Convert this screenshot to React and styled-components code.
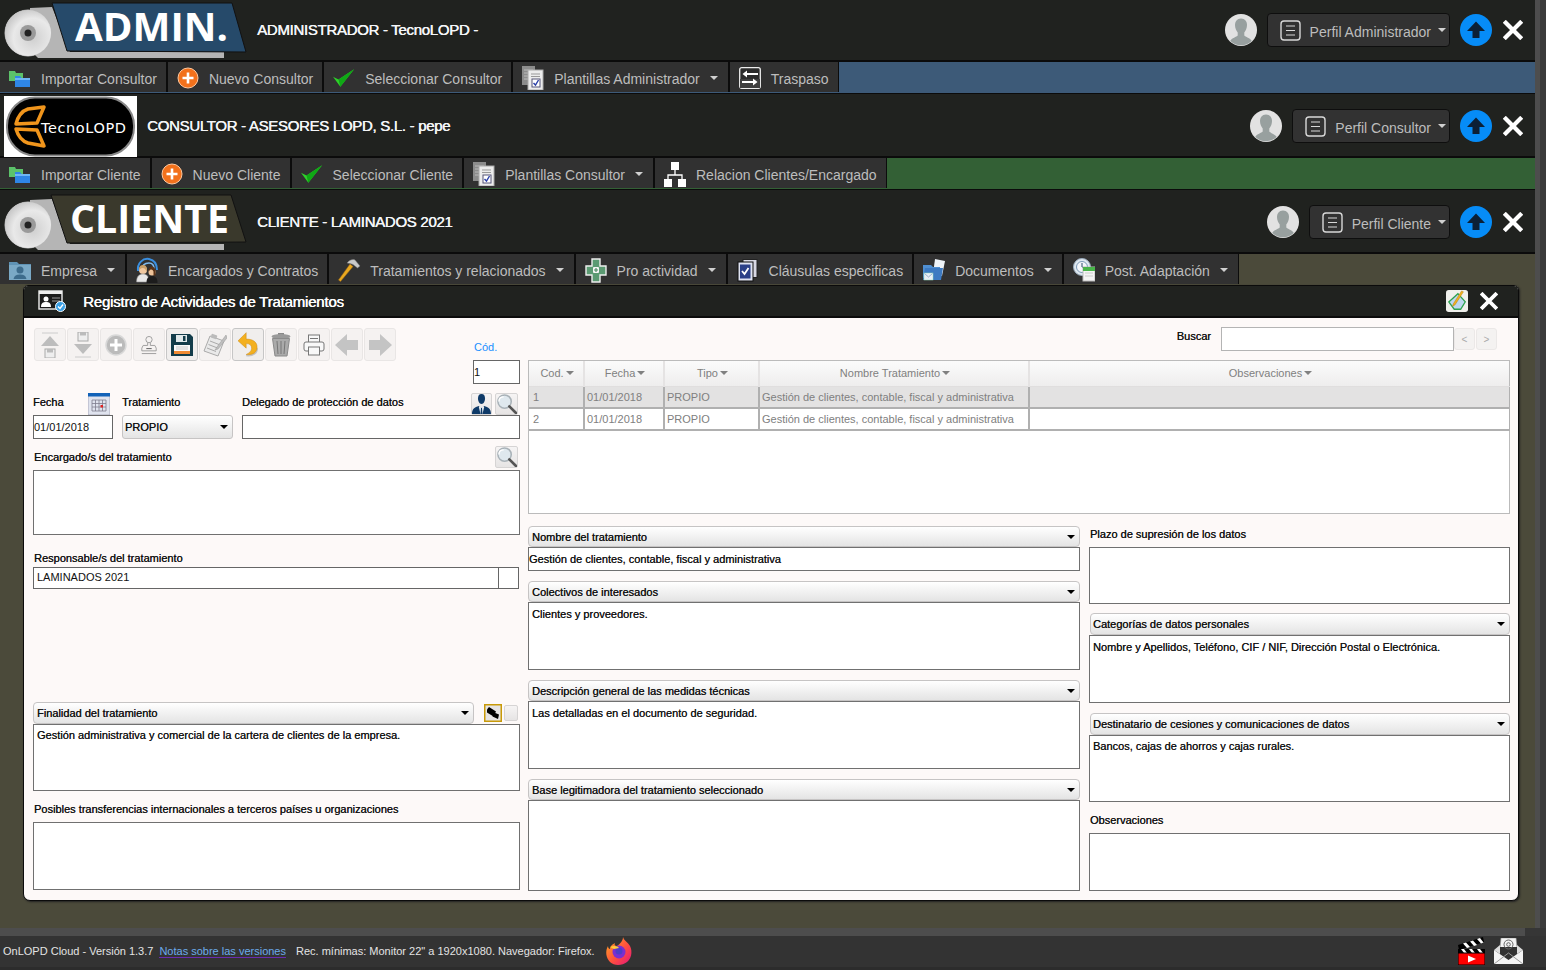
import React from "react";
import styled, { createGlobalStyle } from "styled-components";

const Global = createGlobalStyle`
  html, body { margin: 0; padding: 0; background: #4b4a3a; overflow: hidden; }
  body { font-family: "Liberation Sans", Arial, sans-serif; }
  * { box-sizing: border-box; }
`;

const Page = styled.div`width: 1546px; height: 970px; display: flex; flex-direction: column;`;
const Shell = styled.div`display: flex; height: 928px;`;
const Main = styled.div`width: 1535px; display: flex; flex-direction: column;`;
const ScrollTrack = styled.div`
  width: 11px; display: flex;
  background: #3b3b3b;
  &::before { content: ""; width: 5px; background: #4d4d4d; }
`;

const HeaderBar = styled.header`
  height: ${p => p.$h}px; flex: none; display: flex; align-items: flex-start;
  background: #20221f; border-bottom: 2px solid #0b0b0b;
`;
const LogoSlot = styled.div`width: ${p => p.$w}px; flex: none; display: flex; padding-left: ${p => p.$pl || 0}px; padding-top: ${p => p.$pt || 0}px;`;
const RowTitle = styled.h1`
  margin: 0; font-size: 15px; font-weight: 400; color: #f4f6f8; line-height: 18px; letter-spacing: -0.3px;
  text-shadow: 0.4px 0 0 #f4f6f8; padding-top: ${p => p.$pt}px; white-space: nowrap;
`;
const RowRight = styled.div`margin-left: auto; display: flex; align-items: center; padding: ${p => p.$pt}px 12px 0 0;`;
const ProfileBtn = styled.button`
  height: 34px; display: flex; align-items: center; margin: 0 10px; padding: 0 3px 0 12px;
  background: #323232; border: 1px solid #0e0e0e; border-radius: 4px; color: #bdbdbd; font: 14px "Liberation Sans", sans-serif;
`;
const ProfileLabel = styled.span`margin: 4px 7px 0 9px;`;
const Caret = styled.i`
  display: inline-block; width: 0; height: 0; flex: none;
  border-left: ${p => p.$s || 4}px solid transparent; border-right: ${p => p.$s || 4}px solid transparent;
  border-top: ${p => p.$t || 4}px solid ${p => p.$c || "#d0d0d0"};
`;

const Nav = styled.nav`height: ${p => p.$end ? 31 : 32}px; flex: none; display: flex; background: ${p => p.$bg}; ${p => !p.$end && "border-bottom: 1px solid #0b0b0b;"}`;
const NavItem = styled.a`
  height: 30px; display: flex; align-items: center; padding: 2px ${p => p.$caret ? 10 : 9}px 0 7px; background: #313131;
  border-right: 1px solid #0c0c0c; border-left: 1px solid #0c0c0c; color: #bdbdbd; font-size: 14px; white-space: nowrap;
  &:first-child { border-left: 0; }
`;
const NavIcon = styled.span`width: 26px; height: 26px; margin-right: 8px; display: flex; align-items: center; justify-content: center; flex: none;`;
const NavLabel = styled.span`margin-top: 2px;`;
const NavCaret = styled.span`margin-left: 10px; display: flex;`;

const Win = styled.section`
  margin-left: 23px; width: 1496px; height: 616px; display: flex; flex-direction: column;
  border: 1px solid #0b0b0b; border-radius: 5px 5px 7px 7px; overflow: hidden; background: #fdf9f8;
  box-shadow: 1px 1px 2px #222;
`;
const WinTitle = styled.div`
  height: 32px; flex: none; display: flex; align-items: center; background: #20221f; border-bottom: 2px solid #0b0b0b; padding: 0 20px 0 14px;
`;
const WinHeading = styled.h2`
  margin: 1px 0 0 17px; font-size: 15px; font-weight: 400; letter-spacing: -0.2px; color: #fff; text-shadow: 0.4px 0 0 #fff;
`;
const WinActions = styled.div`margin-left: auto; display: flex; align-items: center; gap: 12px;`;
const WinBody = styled.div`flex: 1; display: flex; padding: 10px 8px 0 9px; gap: 8px;`;

const LeftCol = styled.div`width: 487px; flex: none; display: flex; flex-direction: column;`;
const RightArea = styled.div`width: 982px; flex: none; display: flex; flex-direction: column;`;

const TopRow = styled.div`height: 64px; display: flex; justify-content: space-between;`;
const Tools = styled.div`display: flex; gap: 1px; padding-left: 1px; height: 33px;`;
const Tool = styled.button`
  width: 32px; height: 33px; padding: 0; display: flex; align-items: center; justify-content: center;
  background: ${p => p.$on ? "#f0eeed" : "#f5f2f1"}; border: 1px solid ${p => p.$on ? "#c6c6c6" : "#e9e6e5"}; border-radius: 3px;
`;
const CodBlock = styled.div`width: 47px; display: flex; flex-direction: column; padding-top: 12px;`;
const CodLabel = styled.span`font-size: 11px; line-height: 14px; color: #1a8fff; padding-left: 1px; margin-bottom: 6px;`;

const Input = styled.div`
  height: ${p => p.$h || 24}px; width: ${p => p.$w ? p.$w + "px" : "100%"}; flex: none;
  display: flex; align-items: center; padding: 0 0 ${p => p.$pb || 0}px ${p => p.$pl ?? 0}px;
  background: #fff; border: 1px solid #666; color: #111; font-size: 11px;
`;
const Label = styled.span`font-size: 11px; line-height: 14px; color: #111; text-shadow: 0.2px 0 0 #333; white-space: nowrap;`;
const LabelRow = styled.div`
  height: ${p => p.$h || 23}px; display: flex; align-items: center; justify-content: space-between;
  padding: 0 ${p => p.$pr || 0}px ${p => p.$pb ?? 3}px ${p => p.$pl || 0}px;
`;
const DataRow = styled.div`display: flex; gap: 9px;`;
const DataCol = styled.div`width: ${p => p.$w}px; flex: none; display: flex; flex-direction: column;`;
const IconGroup = styled.div`display: flex; align-items: center; gap: 3px; margin-top: 3px;`;
const IconTile = styled.span`
  width: ${p => p.$w || 22}px; height: ${p => p.$ih || 22}px; display: flex; align-items: center; justify-content: center; flex: none;
  background: linear-gradient(#f6f4f4, #e6e4e4); border: 1px solid #d6d4d4; border-radius: 2px;
`;
const SelectBox = styled.div`
  height: ${p => p.$h || 24}px; width: ${p => p.$w ? p.$w + "px" : "auto"}; display: flex; align-items: center; justify-content: space-between;
  padding: 0 4px 0 ${p => p.$pl || 3}px; margin-left: ${p => p.$ml || 0}px;
  background: linear-gradient(#fff, #e4e4e4); border: 1px solid #c6c4c4; border-radius: ${p => p.$round || "4px"};
  color: #111; font-size: 11px; text-shadow: 0.2px 0 0 #333;
`;
const Block = styled.div`margin-top: ${p => p.$mt || 0}px; display: ${p => p.$flex ? "flex" : "block"}; align-items: center; gap: ${p => p.$gap || 0}px;`;
const Box = styled.div`
  height: ${p => p.$h}px; background: #fff; border: 1px solid #707070; padding: ${p => p.$pad || "4px 3px"};
  font-size: 11px; line-height: 14px; color: #111; text-shadow: 0.15px 0 0 #444;
`;
const TinyBox = styled.div`width: 20px; height: 22px; border: 1px solid #666; border-left: 0; background: #fff;`;
const Spacer = styled.span`width: ${p => p.$w}px; flex: none;`;

const SearchRow = styled.div`height: 32px; display: flex; justify-content: flex-end; padding-right: 12px;`;
const SearchLabel = styled.span`font-size: 11px; line-height: 14px; color: #111; text-shadow: 0.2px 0 0 #333; margin: 1px 10px 0 0;`;
const SearchInput = styled.div`width: 233px; height: 24px; margin-top: -1px; background: #fff; border: 1px solid #b4b4b4;`;
const PageBtn = styled.button`
  width: 21px; height: 22px; padding: 0; margin-right: 1px; background: #f4f2f1; border: 1px solid #ebe8e7; border-radius: 3px;
  color: #aaa; font: 10px "Liberation Sans", sans-serif;
`;

const TableWrap = styled.div`height: 154px; background: #fff; border: 1px solid #bbb;`;
const Grid = styled.table`width: 980px; table-layout: fixed; border-collapse: collapse; font-size: 11px; color: #808080;`;
const Th = styled.th`
  height: 25px; font-weight: 400; text-align: center; padding: 0 0 0 2px; background: linear-gradient(#fbfbfb, #eeeded);
  border-right: 2px solid #e5e3e3; border-bottom: 1px solid #e0dede;
  &:last-child { border-right: 0; }
`;
const ThInner = styled.span`display: inline-flex; align-items: center; gap: 2px;`;
const Td = styled.td`
  height: 22px; padding: 0 0 0 2px; background: ${p => p.$sel ? "#e3e2e2" : "#fff"};
  border-right: 2px solid #b0b0b0; border-bottom: 2px solid #b0b0b0; white-space: nowrap; overflow: hidden;
  &:first-child { padding-left: 4px; }
  &:last-child { border-right: 1px solid #b0b0b0; }
`;

const Lower = styled.div`display: flex; gap: 9px; margin-top: 12px;`;
const MidCol = styled.div`width: 552px; flex: none;`;
const SideCol = styled.div`width: 421px; flex: none;`;

const SideLabelRow = styled.div`height: ${p => p.$h || 21}px; display: flex; align-items: center; padding: 0 0 ${p => p.$pb || 0}px 1px;`;

const BottomStrip = styled.div`height: 8px; flex: none; background: #363636; &::before { content: ""; display: block; width: 1525px; height: 8px; background: #4d4d4d; }`;
const Footer = styled.footer`
  height: 34px; flex: none; display: flex; align-items: center; padding: 0 23px 4px 3px; background: #333; box-shadow: inset 0 -3px 0 #2c2c2c;
  font-size: 11px; color: #e4e4e4; white-space: nowrap;
`;
const FootLink = styled.a`margin-left: 6px; color: #6cabeb; border-bottom: 1px solid #6a2bb0; line-height: 12px;`;
const FootRec = styled.span`margin-left: 10px; margin-right: 10px;`;
const FootRight = styled.div`margin-left: auto; display: flex; align-items: center; gap: 9px;`;

/* ---------- drawings ---------- */
const Disc = ({ cy }) => (
  <g>
    <circle cx="28" cy={cy} r="23" fill="#dcdcdc" stroke="#bbb" />
    <circle cx="28" cy={cy} r="23" fill="url(#dg)" />
    <circle cx="28" cy={cy} r="8" fill="#9a9a9a" />
    <circle cx="28" cy={cy} r="3.5" fill="#222" />
  </g>
);
const DiscDefs = () => (
  <defs>
    <radialGradient id="dg" cx="0.6" cy="0.6" r="0.7">
      <stop offset="0" stopColor="#cfcfcf" />
      <stop offset="0.6" stopColor="#e9e9e9" />
      <stop offset="1" stopColor="#bdbdbd" />
    </radialGradient>
  </defs>
);
const LogoAdmin = () => (
  <svg width="250" height="60" viewBox="0 0 250 60">
    <DiscDefs />
    <polygon points="30,8 52,7 70,52 224,52 224,58 38,58 30,50" fill="#b5b5b5" />
    <polygon points="52,3 232,3 246,52 67,51" fill="#264a6a" stroke="#111" />
    <Disc cy="33" />
    <text x="75" y="41" fontFamily="Open Sans" fontWeight="700" fontSize="39" fill="#fff" textLength="153" lengthAdjust="spacingAndGlyphs">ADMIN.</text>
  </svg>
);
const LogoCliente = () => (
  <svg width="250" height="62" viewBox="0 0 250 62">
    <DiscDefs />
    <polygon points="30,10 52,9 70,54 224,54 224,60 38,60 30,52" fill="#b5b5b5" />
    <polygon points="51,5 231,5 246,52 67,53" fill="#3a392c" stroke="#111" />
    <Disc cy="35" />
    <text x="70" y="43" fontFamily="Open Sans" fontWeight="700" fontSize="39" fill="#fff" textLength="159" lengthAdjust="spacingAndGlyphs">CLIENTE</text>
  </svg>
);
const LogoTecno = () => (
  <svg width="133" height="61" viewBox="0 0 133 61">
    <rect width="133" height="61" fill="#fff" />
    <rect x="3" y="1.5" width="127" height="58" rx="28" fill="#000" stroke="#888" strokeWidth="2" />
    <path d="M12 28 C14 20 18 15 24 13 L40 11 L33 27 Z M12 33 L33 34 L40 50 L24 47 C18 45 14 40 12 33 Z" fill="none" stroke="#f0951c" strokeWidth="3.500" strokeLinejoin="round" />
    <text x="37" y="37" fontFamily="DejaVu Sans" fontSize="14.5" fill="#fff" textLength="85">TecnoLOPD</text>
  </svg>
);
const Avatar = () => (
  <svg width="32" height="32" viewBox="0 0 32 32">
    <circle cx="16" cy="16" r="16" fill="#e2e2e2" />
    <path d="M16 4.500c4 0 6 3 6 6.500 0 3-1.300 6-2.700 7.500v3c1 1.500 6 2.500 7.500 5.500A16 16 0 0 1 5.200 27C6.700 24 11.700 23 12.700 21.500v-3C11.300 17 10 14 10 11c0-3.500 2-6.500 6-6.500z" fill="#98a09f" />
  </svg>
);
const ListIco = () => (
  <svg width="21" height="21" viewBox="0 0 21 21" fill="none" stroke="#d8d8d8">
    <rect x="1" y="1" width="19" height="19" rx="3" strokeWidth="1.400" />
    <path d="M6 6h9M6 10.500h9M6 15h9" strokeWidth="1.200" />
  </svg>
);
const UpBtn = () => (
  <svg width="32" height="32" viewBox="0 0 32 32">
    <circle cx="16" cy="16" r="16" fill="#068cf7" />
    <path d="M16 7.500 25 17h-5.500v7h-7v-7H7z" fill="#0c2036" />
  </svg>
);
const CloseX = ({ s = 20 }) => (
  <svg width={s} height={s} viewBox="0 0 18 18"><path d="M2.500 2.500l13 13M15.500 2.500l-13 13" stroke="#fff" strokeWidth="3.800" strokeLinecap="square" /></svg>
);

const IImport = () => (
  <svg width="22" height="17" viewBox="0 0 22 17">
    <path d="M0 1h6l1 2h7v8H0z" fill="#5cc26a" />
    <path d="M6 6h5l1.500 2H21v9H6z" fill="#2f86e6" />
    <path d="M6 8h15v2H6z" fill="#6fb6f5" />
  </svg>
);
const IPlus = () => (
  <svg width="22" height="22" viewBox="0 0 22 22">
    <circle cx="11" cy="11" r="10" fill="#f2711c" stroke="#ffc9a0" strokeWidth="1" />
    <path d="M11 5.500v11M5.500 11h11" stroke="#fff" strokeWidth="2.600" />
  </svg>
);
const ICheck = () => (
  <svg width="22" height="19" viewBox="0 0 24 20">
    <path d="M0 8l6 3L23 0 8 19z" fill="#2fd02a" />
    <path d="M6 11 23 0 8 19z" fill="#0fa815" />
  </svg>
);
const IDocs = () => (
  <svg width="22" height="24" viewBox="0 0 22 24">
    <rect x="0" y="0" width="13" height="19" fill="#8c8c8c" />
    <path d="M2 4h9M2 7h9M2 10h9M2 13h9" stroke="#bbb" />
    <rect x="6" y="4" width="15" height="20" fill="#ececec" stroke="#aaa" />
    <path d="M9 8h9M9 10.500h9" stroke="#999" />
    <rect x="10" y="13" width="8" height="8" fill="#fff" stroke="#557" />
    <path d="M11.500 17l2 2 3-5" stroke="#2a3fa8" strokeWidth="1.400" fill="none" />
  </svg>
);
const ISwap = () => (
  <svg width="22" height="22" viewBox="0 0 22 22">
    <rect x="0.700" y="0.700" width="20.600" height="20.600" rx="2" fill="#2c2c2c" stroke="#ededed" strokeWidth="1.300" />
    <path d="M1 12 21 12V21H1z" fill="#3e3e3e" />
    <path d="M8 3.500 3.500 7 8 10.500V8h11V6H8zM14 11.500 18.500 15 14 18.500V16H3v-2h11z" fill="#fff" />
  </svg>
);
const ITree = () => (
  <svg width="22" height="25" viewBox="0 0 22 25">
    <rect x="7" y="0" width="8" height="8" fill="#fff" />
    <rect x="0" y="17" width="8" height="8" fill="#fff" />
    <rect x="14" y="17" width="8" height="8" fill="#fff" />
    <path d="M11 8v5M4 17v-4h14v4" stroke="#fff" strokeWidth="1.300" fill="none" />
  </svg>
);
const IFolderUser = () => (
  <svg width="22" height="22" viewBox="0 0 22 22">
    <path d="M0 3h8l2 2h12v16H0z" fill="#5f93b5" />
    <path d="M0 6h22v15H0z" fill="#7aa9c6" />
    <circle cx="11" cy="11" r="3.500" fill="#3d6c8c" />
    <path d="M4.500 20c1-4 4-4.500 6.500-4.500s5.500.5 6.500 4.500z" fill="#3d6c8c" />
  </svg>
);
const IPeople = () => (
  <svg width="24" height="26" viewBox="0 0 24 26">
    <path d="M3 14C2 6 8 1 14 2c5 1 8 5 8 11" fill="none" stroke="#3a8fe0" strokeWidth="2" />
    <path d="M7 13c0-5 3-7 7-7 3 0 5 2 5 6" fill="none" stroke="#7db9ee" strokeWidth="1.600" />
    <circle cx="8" cy="13" r="4" fill="#f0c8a0" />
    <path d="M4 13c0-4 2-5 4-5s4 1 4 5-1-2-4-2-4 3-4 2z" fill="#c9a06a" />
    <path d="M1.500 25c0-6 3-8 6.500-8s6 2 6 8z" fill="#e8e8e8" stroke="#8a8a8a" strokeWidth=".6" />
    <circle cx="17" cy="15" r="3.500" fill="#edc39a" />
    <path d="M13.500 14c0-3 2-4.500 3.500-4.500s3.500 1.500 3.500 5v4h-2v-4c-1-2-2-2-3-2l-2 2z" fill="#5a3216" />
    <path d="M11.500 26c0-5 2-7 5.500-7s5.500 2 5.500 7z" fill="#1c1c1c" />
  </svg>
);
const IHammer = () => (
  <svg width="24" height="24" viewBox="0 0 24 24">
    <path d="M13 6 1.500 22l2 1.500L16 8.500z" fill="#e9a820" stroke="#a06a10" strokeWidth=".5" />
    <path d="M10 5c3-3.500 6-4 8-3l5 6-2.500 2L16 6.500c-2-1-4-1-6-1.500z" fill="#c9c9c9" stroke="#777" strokeWidth=".5" />
  </svg>
);
const ICross = () => (
  <svg width="22" height="25" viewBox="0 0 22 25">
    <path d="M7 1h8v7h6v9h-6v7H7v-7H1V8h6z" fill="#5b9a72" stroke="#eee" strokeWidth="1.400" />
    <rect x="8" y="9" width="6" height="6" rx="1" fill="#f4f4f4" />
    <path d="M11 10v4M9 12h4" stroke="#4c8a63" strokeWidth="1.200" />
  </svg>
);
const IClause = () => (
  <svg width="21" height="23" viewBox="0 0 21 23">
    <rect x="6" y="0.500" width="14" height="18" fill="#d8d8e4" stroke="#222" />
    <rect x="1" y="3" width="15" height="19" fill="#dfe3f2" stroke="#111" />
    <rect x="3" y="5.500" width="10.500" height="14" fill="#2a3f88" />
    <path d="M5 12l2.500 3 4-6" stroke="#fff" strokeWidth="1.800" fill="none" />
  </svg>
);
const IDocum = () => (
  <svg width="22" height="22" viewBox="0 0 22 22">
    <path d="M12 0l10 2-3 15-9-2z" fill="#eef3f8" />
    <path d="M0 6h8l2 2h7v11H0z" fill="#4f8fd2" />
    <path d="M2 9h18l-2 12H0z" fill="#3d7ac2" />
    <rect x="1" y="14" width="9" height="7" fill="#e8eef6" stroke="#9db" strokeWidth=".5" />
    <path d="M1.500 14.500 5.500 18l4-3.500" fill="none" stroke="#7a96b8" strokeWidth=".7" />
  </svg>
);
const IPost = () => (
  <svg width="22" height="24" viewBox="0 0 22 24">
    <circle cx="9" cy="9" r="8.500" fill="#dfe8f0" stroke="#9ab" />
    <circle cx="9" cy="9" r="5.500" fill="#f4f6fa" stroke="#7d9ab8" />
    <path d="M9 5v4l3 1" stroke="#2a4a6a" strokeWidth="1" fill="none" />
    <rect x="10" y="9" width="12" height="14" fill="#f4f4f4" stroke="#bbb" />
    <rect x="10" y="9" width="12" height="4" fill="#49b54a" />
    <path d="M12 15h8M12 18h8" stroke="#ccc" />
  </svg>
);
const IWinForm = () => (
  <svg width="28" height="22" viewBox="0 0 28 22">
    <rect x="1" y="1" width="23" height="18" fill="#1c1c1c" stroke="#eee" strokeWidth="1.400" />
    <rect x="1" y="1" width="23" height="3" fill="#eee" />
    <circle cx="8" cy="9" r="2.500" fill="#fff" />
    <path d="M3 17c0-4 2-5 5-5s5 1 5 5z" fill="#fff" />
    <path d="M14 8h8M14 11h8" stroke="#999" />
    <circle cx="22.500" cy="16.500" r="5" fill="#3aa0e6" stroke="#fff" />
    <path d="M20 16.500l2 2 3-4" stroke="#fff" strokeWidth="1.300" fill="none" />
  </svg>
);
const IEdit = () => (
  <svg width="22" height="22" viewBox="0 0 24 24">
    <rect width="24" height="24" rx="3" fill="#f0f0ec" />
    <path d="M3 13 13 4l8 9-5 8H9z" fill="#bcd7ef" stroke="#2ea24f" strokeWidth="1.400" />
    <path d="M17 1 8 15l-1 3 3-2 9-14z" fill="#f2b21c" stroke="#b07a10" strokeWidth=".5" />
  </svg>
);

const g = { fill: "#bdbdbd" };
const TUp = () => (
  <svg width="20" height="26" viewBox="0 0 20 26">
    <path d="M2 1h16" stroke="#ccc" />
    <path d="M10 4 19 14H1z" {...g} />
    <rect x="5" y="17" width="10" height="9" fill="#eee" stroke="#aaa" />
    <rect x="7" y="17" width="6" height="3.500" fill="#bbb" />
  </svg>
);
const TDown = () => (
  <svg width="20" height="26" viewBox="0 0 20 26">
    <rect x="5" y="0" width="10" height="9" fill="#eee" stroke="#aaa" />
    <rect x="7" y="0" width="6" height="3.500" fill="#bbb" />
    <path d="M10 22 19 12H1z" {...g} />
    <path d="M2 25h16" stroke="#ccc" />
  </svg>
);
const TPlus = () => (
  <svg width="24" height="24" viewBox="0 0 24 24">
    <circle cx="12" cy="12" r="10" fill="#bbb" stroke="#d8d8d8" strokeWidth="1.500" />
    <path d="M12 6v12M6 12h12" stroke="#fff" strokeWidth="3" />
  </svg>
);
const TStamp = () => (
  <svg width="18" height="20" viewBox="0 0 20 22" fill="none" stroke="#999">
    <circle cx="10" cy="5" r="3.500" />
    <path d="M8.500 8.500v3h-5l-1.500 3v3h16v-3l-1.500-3h-5v-3" />
    <path d="M2 20.500h16" />
    <path d="M7 15h6" stroke="#555" />
  </svg>
);
const TSave = () => (
  <svg width="22" height="22" viewBox="0 0 22 22">
    <path d="M0 0h19l3 3v19H0z" fill="#123c4a" />
    <rect x="5" y="1" width="11" height="7" fill="#dfe8ea" />
    <rect x="12" y="2" width="2.500" height="5" fill="#123c4a" />
    <rect x="3" y="11" width="16" height="9" fill="#f9f9f9" />
    <rect x="3" y="17" width="16" height="3" fill="#ef8a33" />
    <path d="M5 13h12M5 15h12" stroke="#c9c9c9" />
  </svg>
);
const TNote = () => (
  <svg width="24" height="24" viewBox="0 0 24 24">
    <path d="M7 3 21 8 15 23 1 18z" fill="#e9e9e9" stroke="#aaa" />
    <path d="M7 8l9 3.500M5.500 11.500l9 3.500M4 15l9 3.500" stroke="#aaa" />
    <path d="M23 2 14 14l-2 3 3-1L24 5z" fill="#bfbfbf" stroke="#999" strokeWidth=".5" />
    <rect x="8" y="1.500" width="6" height="4" rx="1" fill="#bbb" transform="rotate(20 11 3.500)" />
  </svg>
);
const TUndo = () => (
  <svg width="20" height="25" viewBox="0 0 22 26">
    <path d="M9 25c8 1 12-3 12-8" fill="none" stroke="#c4c4c4" strokeWidth="2" />
    <path d="M9 0 0 9l9 8v-5c4 0 6 2 6 5 0 3-2 5-6 7 8 1 12-3 12-8 0-6-5-9-12-9z" fill="#f3b01f" stroke="#c88510" strokeWidth=".5" />
  </svg>
);
const TTrash = () => (
  <svg width="20" height="24" viewBox="0 0 20 24">
    <rect x="7" y="0" width="6" height="2" fill="#888" />
    <ellipse cx="10" cy="3.500" rx="9.500" ry="2.500" fill="#9a9a9a" />
    <path d="M1.500 5.500h17L16 23H4z" fill="#aaa" stroke="#8a8a8a" />
    <path d="M6 8l1 13M10 8v13M14 8l-1 13" stroke="#777" />
  </svg>
);
const TPrint = () => (
  <svg width="22" height="22" viewBox="0 0 22 22" fill="#f8f8f8" stroke="#777">
    <rect x="5.500" y="1" width="11" height="8" />
    <rect x="1" y="8" width="20" height="9" rx="2" />
    <rect x="5.500" y="13" width="11" height="8" />
    <path d="M7 4.500h8" />
  </svg>
);
const TLeft = () => <svg width="24" height="22" viewBox="0 0 24 22"><path d="M12 0v6h11v10H12v6L0 11z" fill="#c4c4c4" /></svg>;
const TRight = () => <svg width="24" height="22" viewBox="0 0 24 22"><path d="M12 0v6H1v10h11v6l12-11z" fill="#c4c4c4" /></svg>;
const ICalendar = () => (
  <svg width="22" height="22" viewBox="0 0 22 22">
    <rect width="22" height="22" fill="#dfe3ee" stroke="#aab" />
    <rect width="22" height="3.500" fill="#1262b8" />
    <path d="M4 7v11M7.500 7v11M11 7v11M14.500 7v11M18 7v11M4 7h14M4 10.500h14M4 14h14M4 18h14" stroke="#7d7d8e" strokeWidth=".8" />
    <rect x="12.500" y="12" width="2.500" height="2.500" fill="#e02020" />
  </svg>
);
const IUserTile = () => (
  <svg width="19" height="20" viewBox="0 0 19 20">
    <path d="M9.500 0c2.700 0 3.500 2 3.500 4.500S11.700 10 9.500 10 6 7 6 4.500 6.800 0 9.500 0z" fill="#0e3a68" />
    <path d="M0 20c0-5 2.500-7 7-8l2.500 2 2.500-2c4.500 1 7 3 7 8z" fill="#0e3a68" />
    <path d="M7.500 12l2 1.800 2-1.800.7 1-1.700 7h-2L6.800 13z" fill="#e8edf2" />
    <path d="M9 14h1l.5 6h-2z" fill="#0e3a68" />
  </svg>
);
const ISearch = () => (
  <svg width="21" height="20" viewBox="0 0 22 21">
    <circle cx="9" cy="8" r="7" fill="#dfe8ee" stroke="#a9b2b8" strokeWidth="1.600" />
    <path d="M3 8c0-3 2-5 5-5" stroke="#fff" strokeWidth="1.500" fill="none" />
    <path d="M14 13 21 20" stroke="#555" strokeWidth="2.800" strokeLinecap="round" />
  </svg>
);
const ICamera = () => (
  <svg width="18" height="18" viewBox="0 0 18 18">
    <rect x=".75" y=".75" width="16.500" height="16.500" fill="#e6e4e4" stroke="#c89a08" strokeWidth="1.500" />
    <path d="M3 5.500 5 3l7 4.500-2.500 5L3 8.500z" fill="#000" />
    <path d="M10 8.500 15 10.500 14 15 8.500 12.500z" fill="#000" />
  </svg>
);
const Firefox = () => (
  <svg width="30" height="30" viewBox="0 0 30 30">
    <defs>
      <linearGradient id="ff" x1="0" y1="0" x2="1" y2="1"><stop offset="0" stopColor="#ffb021" /><stop offset=".55" stopColor="#ff4f3e" /><stop offset="1" stopColor="#e3147e" /></linearGradient>
    </defs>
    <path d="M18 1c1 4 5 5 7 9 3 6 1 13-3 16-5 4-13 4-17 0C1 22 0 15 3 10c0 2 1 3 2 3 0-3 3-5 5-6-1 2 0 3 2 3 3-2 6-5 6-9z" fill="url(#ff)" />
    <circle cx="14" cy="16" r="6.500" fill="#7a2fd0" />
    <circle cx="14" cy="15" r="3.500" fill="#4d3cc8" />
    <path d="M5 11c4-2 8-1 9 1l-5 1z" fill="#ffcd3a" />
  </svg>
);
const Clapper = () => (
  <svg width="27" height="28" viewBox="0 0 27 28">
    <path d="M0 8 25 0l1 5L1 13z" fill="#000" />
    <path d="M5 6.500 9 11l3-1-4-4.500zM12 4.500l4 4.500 3-1-4-4.500zM19 2l4 4.500 2.500-1L22 1z" fill="#fff" />
    <rect x="0" y="12" width="27" height="4" fill="#000" />
    <path d="M3 12l3 4h3l-3-4zM11 12l3 4h3l-3-4zM19 12l3 4h3l-3-4z" fill="#fff" />
    <rect x="0" y="16" width="27" height="12" fill="#f00" stroke="#000" />
    <path d="M10 18.500 18 22l-8 3.500z" fill="#fff" />
  </svg>
);
const Mail = () => (
  <svg width="29" height="26" viewBox="0 0 29 26">
    <path d="M6 9 7 0h15l1 9" fill="#f4f4f4" stroke="#999" strokeWidth=".6" />
    <circle cx="14.500" cy="6.500" r="4.500" fill="none" stroke="#666" strokeWidth="1" />
    <circle cx="14.500" cy="6.500" r="1.800" fill="none" stroke="#666" strokeWidth="1" />
    <path d="M0 12 14.500 22 29 12v14H0z" fill="#f4f4f4" />
    <path d="M0 12 6 7v9zM29 12l-6-5v9z" fill="#ddd" />
    <path d="M0 26 14.500 15 29 26" fill="none" stroke="#999" />
  </svg>
);

const Item = ({ icon, label, caret }) => (
  <NavItem $caret={caret}>
    <NavIcon>{icon}</NavIcon>
    <NavLabel>{label}</NavLabel>
    {caret && <NavCaret><Caret /></NavCaret>}
  </NavItem>
);

const Right = ({ label, pt }) => (
  <RowRight $pt={pt}>
    <Avatar />
    <ProfileBtn>
      <ListIco />
      <ProfileLabel>{label}</ProfileLabel>
      <Caret />
    </ProfileBtn>
    <UpBtn />
    <Spacer $w={11} />
    <CloseX />
  </RowRight>
);

const Head = ({ children }) => (
  <Th><ThInner>{children}<Caret $s={4} $t={4} $c="#808080" /></ThInner></Th>
);
const TRow = ({ n, sel }) => (
  <tr>
    <Td $sel={sel}>{n}</Td>
    <Td $sel={sel}>01/01/2018</Td>
    <Td $sel={sel}>PROPIO</Td>
    <Td $sel={sel}>Gestión de clientes, contable, fiscal y administrativa</Td>
    <Td $sel={sel} />
  </tr>
);
const Sel = ({ children, ...rest }) => (
  <SelectBox $h={21} {...rest}>{children}<Caret $s={4} $t={4} $c="#000" /></SelectBox>
);

export default function App() {
  return (
    <Page>
      <Global />
      <Shell>
        <Main>
          <HeaderBar $h={62}>
            <LogoSlot $w={257}><LogoAdmin /></LogoSlot>
            <RowTitle $pt={21}>ADMINISTRADOR - TecnoLOPD -</RowTitle>
            <Right label="Perfil Administrador" pt={13} />
          </HeaderBar>
          <Nav $bg="#3d5a78">
            <Item icon={<IImport />} label="Importar Consultor" />
            <Item icon={<IPlus />} label="Nuevo Consultor" />
            <Item icon={<ICheck />} label="Seleccionar Consultor" />
            <Item icon={<IDocs />} label="Plantillas Administrador" caret />
            <Item icon={<ISwap />} label="Traspaso" />
          </Nav>
          <HeaderBar $h={64}>
            <LogoSlot $w={147} $pl={4} $pt={2}><LogoTecno /></LogoSlot>
            <RowTitle $pt={23}>CONSULTOR - ASESORES LOPD, S.L. - pepe</RowTitle>
            <Right label="Perfil Consultor" pt={15} />
          </HeaderBar>
          <Nav $bg="#336035">
            <Item icon={<IImport />} label="Importar Cliente" />
            <Item icon={<IPlus />} label="Nuevo Cliente" />
            <Item icon={<ICheck />} label="Seleccionar Cliente" />
            <Item icon={<IDocs />} label="Plantillas Consultor" caret />
            <Item icon={<ITree />} label="Relacion Clientes/Encargado" />
          </Nav>
          <HeaderBar $h={64}>
            <LogoSlot $w={257}><LogoCliente /></LogoSlot>
            <RowTitle $pt={23}>CLIENTE - LAMINADOS 2021</RowTitle>
            <Right label="Perfil Cliente" pt={15} />
          </HeaderBar>
          <Nav $bg="#4b4a3a" $end>
            <Item icon={<IFolderUser />} label="Empresa" caret />
            <Item icon={<IPeople />} label="Encargados y Contratos" />
            <Item icon={<IHammer />} label="Tratamientos y relacionados" caret />
            <Item icon={<ICross />} label="Pro actividad" caret />
            <Item icon={<IClause />} label="Cláusulas especificas" />
            <Item icon={<IDocum />} label="Documentos" caret />
            <Item icon={<IPost />} label="Post. Adaptación" caret />
          </Nav>

          <Win>
            <WinTitle>
              <IWinForm />
              <WinHeading>Registro de Actividades de Tratamientos</WinHeading>
              <WinActions><IEdit /><CloseX s={18} /></WinActions>
            </WinTitle>
            <WinBody>
              <LeftCol>
                <TopRow>
                  <Tools>
                    <Tool><TUp /></Tool>
                    <Tool><TDown /></Tool>
                    <Tool><TPlus /></Tool>
                    <Tool><TStamp /></Tool>
                    <Tool $on><TSave /></Tool>
                    <Tool><TNote /></Tool>
                    <Tool $on><TUndo /></Tool>
                    <Tool><TTrash /></Tool>
                    <Tool><TPrint /></Tool>
                    <Tool><TLeft /></Tool>
                    <Tool><TRight /></Tool>
                  </Tools>
                  <CodBlock>
                    <CodLabel>Cód.</CodLabel>
                    <Input>1</Input>
                  </CodBlock>
                </TopRow>

                <DataRow>
                  <DataCol $w={80}>
                    <LabelRow $pr={3}><Label>Fecha</Label><IconGroup><ICalendar /></IconGroup></LabelRow>
                    <Input>01/01/2018</Input>
                  </DataCol>
                  <DataCol $w={111}>
                    <LabelRow><Label>Tratamiento</Label></LabelRow>
                    <SelectBox $round="3px" $pl={2}>PROPIO<Caret $s={4} $t={4} $c="#000" /></SelectBox>
                  </DataCol>
                  <DataCol $w={278}>
                    <LabelRow $pr={2}>
                      <Label>Delegado de protección de datos</Label>
                      <IconGroup>
                        <IconTile $w={21}><IUserTile /></IconTile>
                        <IconTile $w={23}><ISearch /></IconTile>
                      </IconGroup>
                    </LabelRow>
                    <Input />
                  </DataCol>
                </DataRow>

                <Block $mt={8}>
                  <LabelRow $pl={1} $pr={2} $pb={3}>
                    <Label>Encargado/s del tratamiento</Label>
                    <IconTile $w={23}><ISearch /></IconTile>
                  </LabelRow>
                  <Box $h={65} />
                </Block>

                <Block $mt={14}>
                  <LabelRow $h={18} $pl={1} $pb={0}><Label>Responsable/s del tratamiento</Label></LabelRow>
                  <Block $flex>
                    <Input $h={22} $w={466} $pl={3} $pb={2}>LAMINADOS 2021</Input>
                    <TinyBox />
                  </Block>
                </Block>

                <Block $mt={113} $flex>
                  <Sel $h={22} $pl={3} $w={441}>Finalidad del tratamiento</Sel>
                  <Spacer $w={10} />
                  <ICamera />
                  <Spacer $w={2} />
                  <IconTile $w={14} $ih={16} />
                </Block>
                <Box $h={67} $pad="3px 3px">Gestión administrativa y comercial de la cartera de clientes de la empresa.</Box>

                <Block $mt={9}>
                  <LabelRow $h={22} $pl={1} $pb={4}><Label>Posibles transferencias internacionales a terceros países u organizaciones</Label></LabelRow>
                  <Box $h={68} />
                </Block>
              </LeftCol>

              <RightArea>
                <SearchRow>
                  <SearchLabel>Buscar</SearchLabel>
                  <SearchInput />
                  <PageBtn>&lt;</PageBtn>
                  <PageBtn>&gt;</PageBtn>
                </SearchRow>
                <TableWrap>
                  <Grid>
                    <colgroup>
                      <col width="55" /><col width="80" /><col width="95" /><col width="270" /><col width="480" />
                    </colgroup>
                    <thead>
                      <tr>
                        <Head>Cod.</Head><Head>Fecha</Head><Head>Tipo</Head><Head>Nombre Tratamiento</Head><Head>Observaciones</Head>
                      </tr>
                    </thead>
                    <tbody>
                      <TRow n="1" sel />
                      <TRow n="2" />
                    </tbody>
                  </Grid>
                </TableWrap>
                <Lower>
                  <MidCol>
                    <Sel>Nombre del tratamiento</Sel>
                    <Box $h={24} $pad="4px 0">Gestión de clientes, contable, fiscal y administrativa</Box>
                    <Block $mt={10}><Sel>Colectivos de interesados</Sel></Block>
                    <Box $h={68}>Clientes y proveedores.</Box>
                    <Block $mt={10}><Sel>Descripción general de las medidas técnicas</Sel></Block>
                    <Box $h={68}>Las detalladas en el documento de seguridad.</Box>
                    <Block $mt={10}><Sel>Base legitimadora del tratamiento seleccionado</Sel></Block>
                    <Box $h={91} />
                  </MidCol>
                  <SideCol>
                    <SideLabelRow $pb={6}><Label>Plazo de supresión de los datos</Label></SideLabelRow>
                    <Box $h={57} />
                    <Block $mt={9}><Sel $h={22} $ml={1} $pl={2}>Categorías de datos personales</Sel></Block>
                    <Box $h={68}>Nombre y Apellidos, Teléfono, CIF / NIF, Dirección Postal o Electrónica.</Box>
                    <Block $mt={10}><Sel $h={22} $ml={1} $pl={2}>Destinatario de cesiones y comunicaciones de datos</Sel></Block>
                    <Box $h={67} $pad="3px 3px">Bancos, cajas de ahorros y cajas rurales.</Box>
                    <Block $mt={9}>
                      <SideLabelRow $h={22} $pb={4}><Label>Observaciones</Label></SideLabelRow>
                    </Block>
                    <Box $h={58} />
                  </SideCol>
                </Lower>
              </RightArea>
            </WinBody>
          </Win>
        </Main>
        <ScrollTrack />
      </Shell>
      <BottomStrip />
      <Footer>
        <span>OnLOPD Cloud - Versión 1.3.7</span>
        <FootLink>Notas sobre las versiones</FootLink>
        <FootRec>Rec. mínimas: Monitor 22" a 1920x1080. Navegador: Firefox.</FootRec>
        <Firefox />
        <FootRight><Clapper /><Mail /></FootRight>
      </Footer>
    </Page>
  );
}
